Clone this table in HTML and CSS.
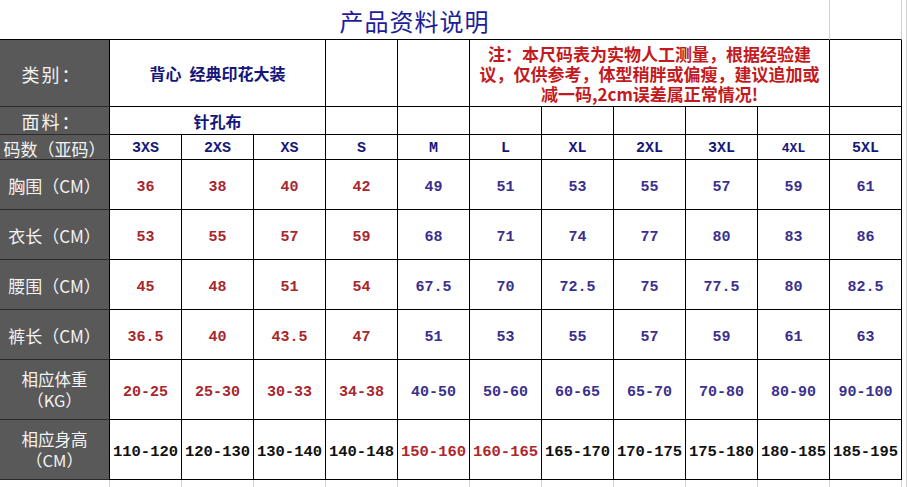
FILE: index.html
```html
<!DOCTYPE html>
<html lang="zh-CN">
<head>
<meta charset="utf-8">
<title>产品资料说明</title>
<link rel="stylesheet" href="styles.css">
</head>
<body>
<div class="sheet">
  <!-- title row -->
  <div class="c top title">产品资料说明</div>
  <div class="c top"></div>
  <div class="c edge"></div>

  <!-- 类别 -->
  <div class="c lab lab-big">类别：</div>
  <div class="c hd span3">背心&ensp;经典印花大装</div>
  <div class="c"></div>
  <div class="c"></div>
  <div class="c note span5">注：本尺码表为实物人工测量，根据经验建<br>议，仅供参考，体型稍胖或偏瘦，建议追加或<br>减一码,2cm误差属正常情况!</div>
  <div class="c"></div>
  <div class="c edge"></div>

  <!-- 面料 -->
  <div class="c lab lab-big">面料：</div>
  <div class="c hd span3">针孔布</div>
  <div class="c"></div><div class="c"></div><div class="c"></div><div class="c"></div>
  <div class="c"></div><div class="c"></div><div class="c"></div><div class="c"></div>
  <div class="c edge"></div>

  <!-- 码数 -->
  <div class="c lab">码数（亚码）</div>
  <div class="c sz">3XS</div>
  <div class="c sz">2XS</div>
  <div class="c sz">XS</div>
  <div class="c sz">S</div>
  <div class="c sz">M</div>
  <div class="c sz">L</div>
  <div class="c sz">XL</div>
  <div class="c sz">2XL</div>
  <div class="c sz">3XL</div>
  <div class="c sz sz-small">4XL</div>
  <div class="c sz">5XL</div>
  <div class="c edge"></div>

  <!-- 胸围 -->
  <div class="c lab">胸围（CM）</div>
  <div class="c v red">36</div>
  <div class="c v red">38</div>
  <div class="c v red">40</div>
  <div class="c v red">42</div>
  <div class="c v blu">49</div>
  <div class="c v blu">51</div>
  <div class="c v blu">53</div>
  <div class="c v blu">55</div>
  <div class="c v blu">57</div>
  <div class="c v blu">59</div>
  <div class="c v blu">61</div>
  <div class="c edge"></div>

  <!-- 衣长 -->
  <div class="c lab">衣长（CM）</div>
  <div class="c v red">53</div>
  <div class="c v red">55</div>
  <div class="c v red">57</div>
  <div class="c v red">59</div>
  <div class="c v blu">68</div>
  <div class="c v blu">71</div>
  <div class="c v blu">74</div>
  <div class="c v blu">77</div>
  <div class="c v blu">80</div>
  <div class="c v blu">83</div>
  <div class="c v blu">86</div>
  <div class="c edge"></div>

  <!-- 腰围 -->
  <div class="c lab">腰围（CM）</div>
  <div class="c v red">45</div>
  <div class="c v red">48</div>
  <div class="c v red">51</div>
  <div class="c v red">54</div>
  <div class="c v blu">67.5</div>
  <div class="c v blu">70</div>
  <div class="c v blu">72.5</div>
  <div class="c v blu">75</div>
  <div class="c v blu">77.5</div>
  <div class="c v blu">80</div>
  <div class="c v blu">82.5</div>
  <div class="c edge"></div>

  <!-- 裤长 -->
  <div class="c lab">裤长（CM）</div>
  <div class="c v red">36.5</div>
  <div class="c v red">40</div>
  <div class="c v red">43.5</div>
  <div class="c v red">47</div>
  <div class="c v blu">51</div>
  <div class="c v blu">53</div>
  <div class="c v blu">55</div>
  <div class="c v blu">57</div>
  <div class="c v blu">59</div>
  <div class="c v blu">61</div>
  <div class="c v blu">63</div>
  <div class="c edge"></div>

  <!-- 相应体重 -->
  <div class="c lab lab-two">相应体重<br>（KG）</div>
  <div class="c v red">20-25</div>
  <div class="c v red">25-30</div>
  <div class="c v red">30-33</div>
  <div class="c v red">34-38</div>
  <div class="c v blu">40-50</div>
  <div class="c v blu">50-60</div>
  <div class="c v blu">60-65</div>
  <div class="c v blu">65-70</div>
  <div class="c v blu">70-80</div>
  <div class="c v blu">80-90</div>
  <div class="c v blu">90-100</div>
  <div class="c edge"></div>

  <!-- 相应身高 -->
  <div class="c lab lab-two">相应身高<br>（CM）</div>
  <div class="c v blk">110-120</div>
  <div class="c v blk">120-130</div>
  <div class="c v blk">130-140</div>
  <div class="c v blk">140-148</div>
  <div class="c v red2">150-160</div>
  <div class="c v red2">160-165</div>
  <div class="c v blk">165-170</div>
  <div class="c v blk">170-175</div>
  <div class="c v blk">175-180</div>
  <div class="c v blk">180-185</div>
  <div class="c v blk">185-195</div>
  <div class="c edge"></div>

  <!-- grid lines below -->
  <div class="c g"></div>
  <div class="c g"></div><div class="c g"></div><div class="c g"></div><div class="c g"></div>
  <div class="c g"></div><div class="c g"></div><div class="c g"></div><div class="c g"></div>
  <div class="c g"></div><div class="c g"></div><div class="c g"></div>
  <div class="c edge"></div>
</div>
</body>
</html>
```

FILE: styles.css
```css
html, body {
  margin: 0;
  padding: 0;
  background: #ffffff;
}

body {
  width: 907px;
  height: 487px;
  overflow: hidden;
  font-family: "Noto Sans CJK SC", "Noto Sans", sans-serif;
}

.sheet {
  display: grid;
  grid-template-columns: 110px repeat(11, 72px) 5px;
  grid-template-rows: 40px 67px 28px 25px repeat(4, 50px) 60px 60px 7px;
}

.c {
  box-sizing: border-box;
  display: flex;
  align-items: center;
  justify-content: center;
  text-align: center;
  border-right: 1px solid #000;
  border-bottom: 1px solid #000;
  white-space: nowrap;
  overflow: hidden;
}

.span3 { grid-column: span 3; }
.span5 { grid-column: span 5; }

/* title row */
.top {
  border-right-color: #cfcfcf;
}
.title {
  grid-column: span 11;
  font-size: 24px;
  letter-spacing: 1px;
  color: #1d1d9b;
  padding-top: 2px;
}

.edge {
  border-bottom: none;
  border-right: 1px solid #d0d0d0;
}

/* grid lines under the table */
.g {
  border-bottom: none;
  border-right-color: #d4d4d4;
}

/* label column */
.lab {
  background: #595959;
  color: #f3f3f3;
  font-size: 17px;
  line-height: 21px;
  border-bottom-color: #2a2a2a;
  padding-top: 2px;
}
.lab-big {
  font-size: 18px;
  letter-spacing: 2px;
  padding-left: 4px;
  padding-right: 10px;
}
.lab-two {
  font-size: 16.5px;
  padding-top: 0;
}

/* header cells */
.hd {
  color: #15157c;
  font-size: 16px;
  font-weight: 700;
}

.note {
  color: #c21a20;
  font-size: 17px;
  font-weight: 700;
  line-height: 20px;
  padding-top: 2px;
}

.sz {
  color: #16167a;
  font-family: "Liberation Mono", monospace;
  font-weight: 700;
  font-size: 15px;
  padding-top: 2px;
}
.sz-small {
  font-size: 13px;
}

/* values */
.v {
  font-family: "Liberation Mono", monospace;
  font-weight: 700;
  font-size: 15px;
  padding-top: 5px;
}
.red { color: #a8272c; }
.blu { color: #3b2f8e; }
.blk { color: #111111; font-size: 15.5px; padding-top: 4px; }
.red2 { color: #b0262b; font-size: 15.5px; padding-top: 4px; }
```
